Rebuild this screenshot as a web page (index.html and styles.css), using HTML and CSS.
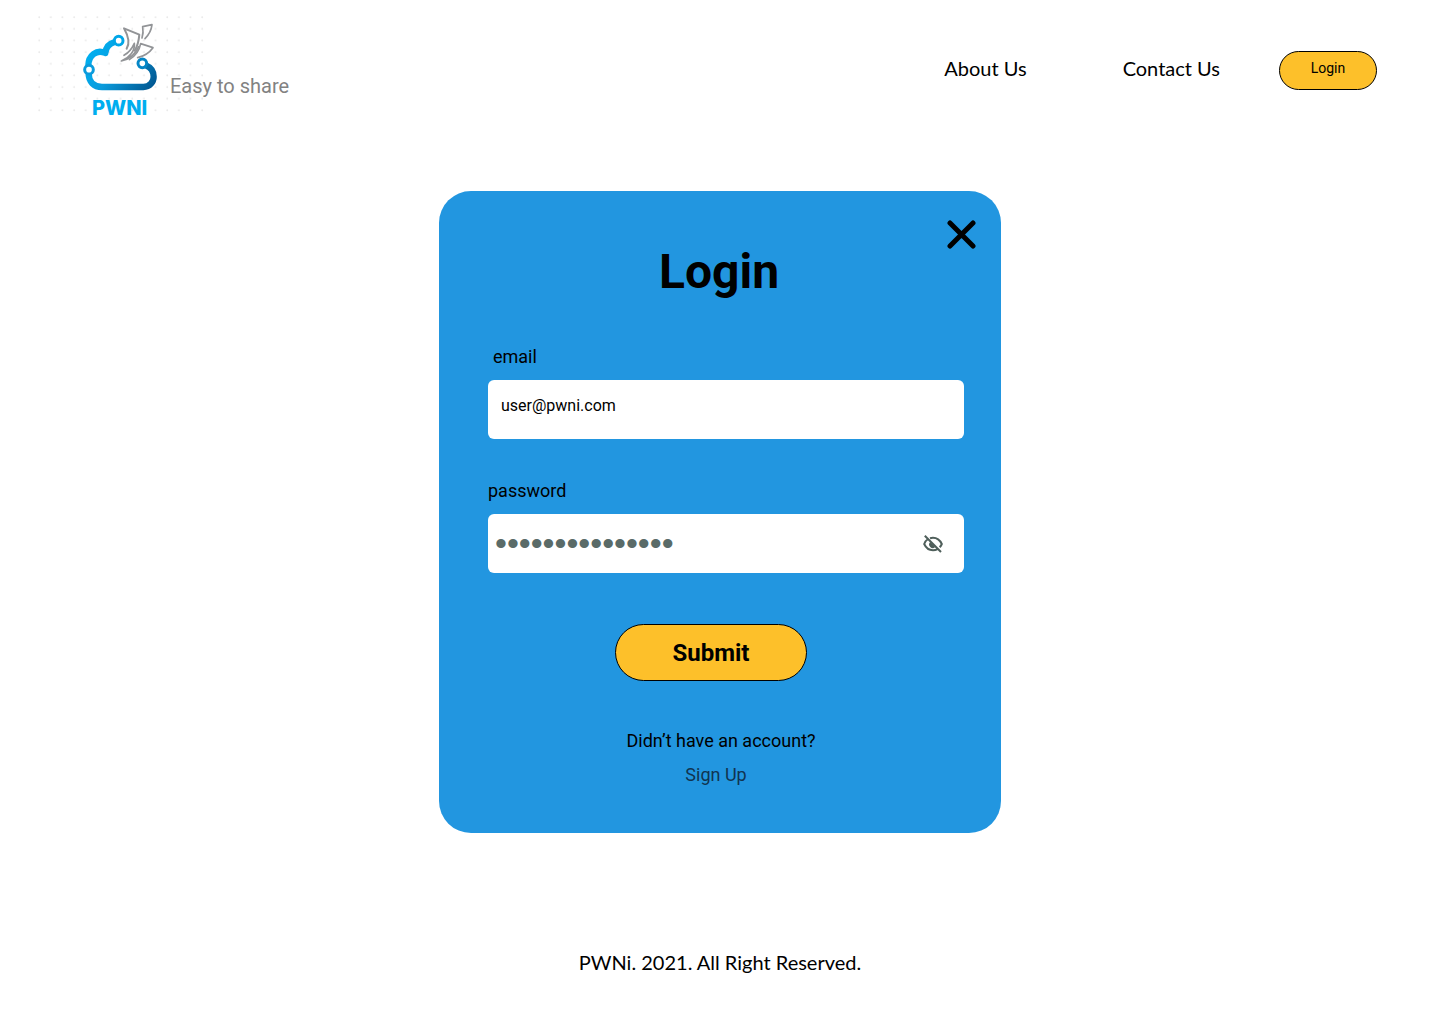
FILE: index.html
```html
<!DOCTYPE html>
<html lang="en">
<head>
<meta charset="utf-8">
<meta name="viewport" content="width=device-width, initial-scale=1">
<title>PWNi – Login</title>
<link rel="stylesheet" href="styles.css">
</head>
<body>
<header class="site-header">
  <div class="brand">
    <svg class="logo" viewBox="36 14 122 104" role="img" aria-label="PWNI">
      <defs>
        <pattern id="dots" x="38" y="16" width="11.64" height="11.64" patternUnits="userSpaceOnUse">
          <circle cx="1.2" cy="1.2" r=".9" fill="#e8e8e8"/>
        </pattern>
        <linearGradient id="cloud" gradientUnits="userSpaceOnUse" x1="60" y1="90" x2="235" y2="215">
          <stop offset="0" stop-color="#00aeef"/>
          <stop offset=".4" stop-color="#0a9bdc"/>
          <stop offset="1" stop-color="#00558f"/>
        </linearGradient>
      </defs>
      <rect x="38" y="16" width="166" height="96" fill="url(#dots)"/>
      <g transform="translate(76 16) scale(.3333)">
        <g fill="none" stroke="url(#cloud)" stroke-width="19" stroke-linejoin="round">
          <path d="M116 78C101 82 90 92 88 111C62 99 37 118 37 149"/>
          <path d="M38 172C38 198 54 213 78 213H202C222 213 233 197 233 182C233 165 224 154 210 148"/>
        </g>
        <g fill="#fff" stroke-width="9">
          <circle cx="128" cy="74" r="13" stroke="#00a6e8"/>
          <circle cx="39" cy="161" r="13" stroke="#0a9bdc"/>
          <circle cx="199" cy="142" r="13" stroke="#0586c6"/>
        </g>
        <g fill="none" stroke="#929497" stroke-width="6" stroke-linejoin="round" stroke-linecap="round">
          <path d="M152 98C161 84 158 62 144 37L190 56C188 78 184 92 176 104"/>
          <path stroke-width="5" d="M144 118C158 110 168 98 175 82C178 104 160 126 136 135C160 130 178 116 188 92"/>
          <path stroke-width="5" d="M198 66C202 54 202 44 200 32L228 26C226 44 219 56 207 68"/>
          <path stroke-width="5" d="M160 131C178 120 190 104 194 83L231 95C221 109 208 119 185 125"/>
        </g>
      </g>
      <text class="logo-name" x="92" y="115">PWNI</text>
    </svg>
    <span class="tagline">Easy to share</span>
  </div>
  <nav class="nav">
    <a href="#about">About Us</a>
    <a href="#contact">Contact Us</a>
    <button type="button" class="pill nav-login">Login</button>
  </nav>
</header>

<main class="main">
  <form class="card">
    <div class="card-head">
      <h1>Login</h1>
      <button type="button" class="close" aria-label="Close">
        <svg viewBox="0 0 30 30"><path d="M4 4L27 27M27 4L4 27"/></svg>
      </button>
    </div>
    <div class="fields">
      <div class="field">
        <label class="label-email" for="email">email</label>
        <input class="email" id="email" type="email" value="user@pwni.com">
      </div>
      <div class="field">
        <label for="password">password</label>
        <div class="password-box">
          <input class="password" id="password" type="password" value="pwni-user-share">
          <button type="button" class="reveal" aria-label="Show password">
            <svg viewBox="0 0 20 20">
              <path d="M5 5C3.200 6.200 2 8 1.200 10C3 14 6 16.200 10 16.200C11.500 16.200 13 15.900 14.200 15.300M7 4.200C8 3.900 9 3.800 10 3.800C14 3.800 17 6.200 18.800 10C18.300 11.200 17.600 12.300 16.700 13.200M1.800 1.800L18 18"/>
              <path class="pupil" d="M7.200 8A3.500 3.500 0 0 0 12.200 12.900Z"/>
            </svg>
          </button>
        </div>
      </div>
    </div>
    <div class="card-foot">
      <div class="submit-row"><button type="submit" class="pill submit">Submit</button></div>
      <p>Didn’t have an account?</p>
      <p class="signup-row"><a href="#signup">Sign Up</a></p>
    </div>
  </form>
</main>

<footer class="site-footer">PWNi. 2021. All Right Reserved.</footer>
</body>
</html>
```
FILE: styles.css
```css
* { box-sizing: border-box; }

body {
  margin: 0;
  min-height: 100vh;
  display: flex;
  flex-direction: column;
  background: #fff;
  color: #000;
  font-family: Roboto, "Liberation Sans", sans-serif;
}

button { padding: 0; font-family: inherit; color: inherit; cursor: pointer; }
a { color: inherit; text-decoration: none; }
svg { display: block; }

.site-header {
  display: flex;
  justify-content: space-between;
  align-items: flex-start;
  padding: 14px 63px 0 36px;
}

.brand { display: flex; align-items: flex-end; gap: 12px; }
.logo { width: 122px; height: 104px; overflow: visible; }
.logo-name { font: 800 20px Inter, sans-serif; fill: #00aeef; }
.tagline {
  position: relative;
  padding-bottom: 20px;
  font-size: 20px;
  line-height: 24px;
  color: #828282;
}

.nav {
  display: flex;
  align-items: center;
  padding-top: 37px;
  font-family: Lato, sans-serif;
  font-size: 20px;
  line-height: 24px;
}
.nav a { margin-right: 96px; padding-bottom: 6px; }
.nav a + a { margin-right: 59px; }

.pill {
  border: 1px solid #000;
  border-radius: 30px;
  background: #fdc02a;
}
.nav-login {
  width: 98px;
  height: 39px;
  padding-bottom: 6px;
  font: 14px Roboto, sans-serif;
}

.main { display: flex; justify-content: center; padding: 73px 16px 0; }

.card {
  width: 100%;
  max-width: 562px;
  padding: 28px 0 46px;
  border-radius: 32px;
  background: #2296e0;
}

.card-head { display: grid; }
.card-head > * { grid-area: 1 / 1; }
.card-head h1 {
  margin: 0;
  padding: 25px 2px 0 0;
  font-size: 48px;
  line-height: 56px;
  font-weight: 700;
  text-align: center;
}
.close {
  justify-self: end;
  align-self: start;
  width: 30px;
  height: 30px;
  margin-right: 25px;
  border: 0;
  background: none;
}
.close svg { fill: none; stroke: #000; stroke-width: 5; stroke-linecap: round; }

.fields {
  display: grid;
  grid-template-columns: minmax(0, 1fr);
  gap: 40px;
  padding: 45px 37px 0 49px;
}
.field { display: grid; grid-template-columns: minmax(0, 1fr); gap: 11px; }
.field label { font-size: 18px; line-height: 24px; }
.label-email { padding-left: 5px; }

.email, .password-box {
  width: 100%;
  height: 59px;
  border: 0;
  border-radius: 6px;
  background: #fff;
}
.email { padding: 0 13px 8px; font: 16px Roboto, sans-serif; color: #000; }
.password-box { display: flex; align-items: center; padding: 0 21px 0 7px; }
.password {
  flex: 1;
  min-width: 0;
  height: 48px;
  padding: 0;
  border: 0;
  background: none;
  color: #5a6b68;
  font: 34px "Liberation Sans", Arial, sans-serif;
}
.reveal { width: 20px; height: 20px; border: 0; background: none; }
.reveal svg { fill: none; stroke: #4f5f5b; stroke-width: 2; }
.reveal .pupil { fill: #4f5f5b; stroke: none; }

.card-foot { padding-top: 51px; text-align: center; font-size: 18px; line-height: 24px; }
.card-foot p { margin: 0; padding-left: 2px; }
.submit-row { padding-right: 18px; margin-bottom: 48px; }
.submit {
  display: block;
  width: 192px;
  height: 57px;
  margin: 0 auto;
  font-size: 24px;
  font-weight: 700;
}
.card-foot .signup-row { padding: 10px 8px 0 0; color: #113451; }

.site-footer {
  padding: 117px 16px 49px;
  text-align: center;
  font: 20px/24px Lato, sans-serif;
}
```
